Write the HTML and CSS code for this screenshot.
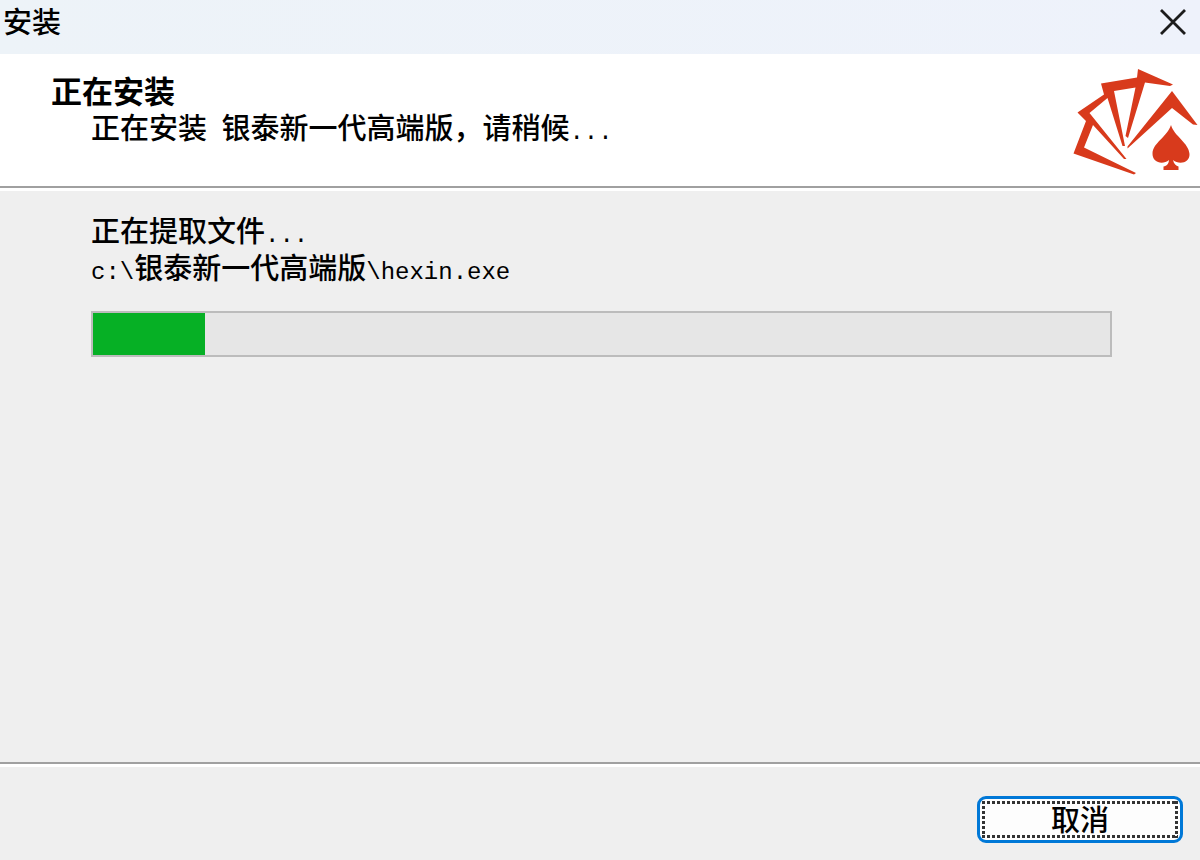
FILE: index.html
```html
<!DOCTYPE html>
<html lang="zh-CN">
<head>
    <meta charset="UTF-8">
    <meta name="viewport" content="width=device-width, initial-scale=1.0">
    <title>安装</title>
    <link rel="stylesheet" href="styles.css">
</head>
<body>
    <div class="window">
        <div class="titlebar">
            <span class="titlebar-text">安装</span>
            <button class="close" type="button" aria-label="关闭">
                <svg width="26" height="26" viewBox="0 0 26 26">
                    <path d="M1 1L25 25M25 1L1 25" fill="none" stroke="#1c1c1c" stroke-width="2.8"/>
                </svg>
            </button>
        </div>

        <header class="header">
            <div class="header-text">
                <h1>正在安装</h1>
                <p>正在安装<span class="latin">&nbsp;</span>银泰新一代高端版，请稍候<span class="latin">...</span></p>
            </div>
            <svg class="logo" width="140" height="132" viewBox="0 0 140 132" fill="#d83a1c">
                <path d="M78 15L113 30.500L110 32L85 28.500L68 84L65.500 82L75.500 33.500L54 37L65 92L62.500 92L47.500 44L29.500 59L66.500 105L64 105L33 71L24 93.500L76 119L74 120.500L13.500 99.500L26 67L17.500 58.500L44 40.500L41 29.500L77 23.500Z"/>
                <path d="M112 37L137.500 71L133 70.500L112 54L67.500 94.500L67.500 92.500Z"/>
                <path d="M111 71C114 82 129 89 129.500 100C130 109 119 111 113 106C114 110 116 112 118.500 112.500L118.500 116H103.500V112.500C107 112 108.500 110 109 106C103 111 92 109 92.500 99C93 89 107 83 111 71Z"/>
            </svg>
        </header>

        <main class="content">
            <p id="status">正在提取文件<span class="latin">...</span></p>
            <p><span class="latin">c:\</span>银泰新一代高端版<span class="latin">\hexin.exe</span></p>
            <progress class="progress" value="11" max="100" aria-labelledby="status"></progress>
        </main>

        <footer class="footer">
            <button class="cancel" type="button"><span class="focus-ring">取消</span></button>
        </footer>
    </div>
</body>
</html>
```
FILE: styles.css
```css
* {
    box-sizing: border-box;
}
body {
    margin: 0;
    font-family: "Noto Sans CJK SC", sans-serif;
    font-size: 29px;
    font-weight: 500;
    line-height: 37px;
    color: #000;
    background-color: #efefef;
}
h1, p {
    margin: 0;
}
.window {
    display: flex;
    flex-direction: column;
    min-height: 100vh;
}
.titlebar {
    display: flex;
    justify-content: space-between;
    align-items: center;
    height: 54px;
    padding: 0 14px 10px 3px;
    background: linear-gradient(90deg, #edf3f8, #eef2fb);
}
.titlebar-text {
    padding-bottom: 4px;
}
.close {
    display: flex;
    padding: 0;
    border: none;
    background: none;
}
.header {
    display: flex;
    justify-content: space-between;
    background-color: #fff;
    border-bottom: 2px solid #a0a0a0;
}
.header-text {
    padding: 17px 0 0 51px;
}
.header h1 {
    font-size: 31px;
    font-weight: 700;
}
.header p {
    padding-left: 40px;
}
.logo {
    flex: none;
}
/* 宋体风格的半角字符 */
.latin {
    font-family: "Liberation Mono", monospace;
    font-size: 24px;
    line-height: 1px;
}
.content {
    flex: 1;
    padding: 20px 88px 0 91px;
    border-top: 3px solid #fff;
    border-bottom: 2px solid #a0a0a0;
}
.progress {
    display: block;
    width: 100%;
    height: 46px;
    margin-top: 26px;
    appearance: none;
    border: 2px solid #bcbcbc;
    background-color: #e6e6e6;
}
.progress::-webkit-progress-bar {
    background-color: #e6e6e6;
}
.progress::-webkit-progress-value {
    background-color: #06b025;
}
.footer {
    display: flex;
    justify-content: flex-end;
    padding: 29px 17px 17px;
    border-top: 3px solid #fff;
}
.cancel {
    width: 206px;
    height: 47px;
    padding: 2px;
    border: 3px solid #0078d7;
    border-radius: 9px;
    background-color: #fdfdfd;
    font: inherit;
    color: #000;
}
/* 焦点虚线框 */
.focus-ring {
    display: flex;
    justify-content: center;
    align-items: center;
    height: 100%;
    padding-bottom: 3px;
    background:
        repeating-linear-gradient(90deg, #333 0 3px, transparent 3px 5px) top / 100% 3px no-repeat,
        repeating-linear-gradient(90deg, #333 0 3px, transparent 3px 5px) bottom / 100% 3px no-repeat,
        repeating-linear-gradient(#333 0 3px, transparent 3px 5px) left / 3px 100% no-repeat,
        repeating-linear-gradient(#333 0 3px, transparent 3px 5px) right / 3px 100% no-repeat;
}
```
